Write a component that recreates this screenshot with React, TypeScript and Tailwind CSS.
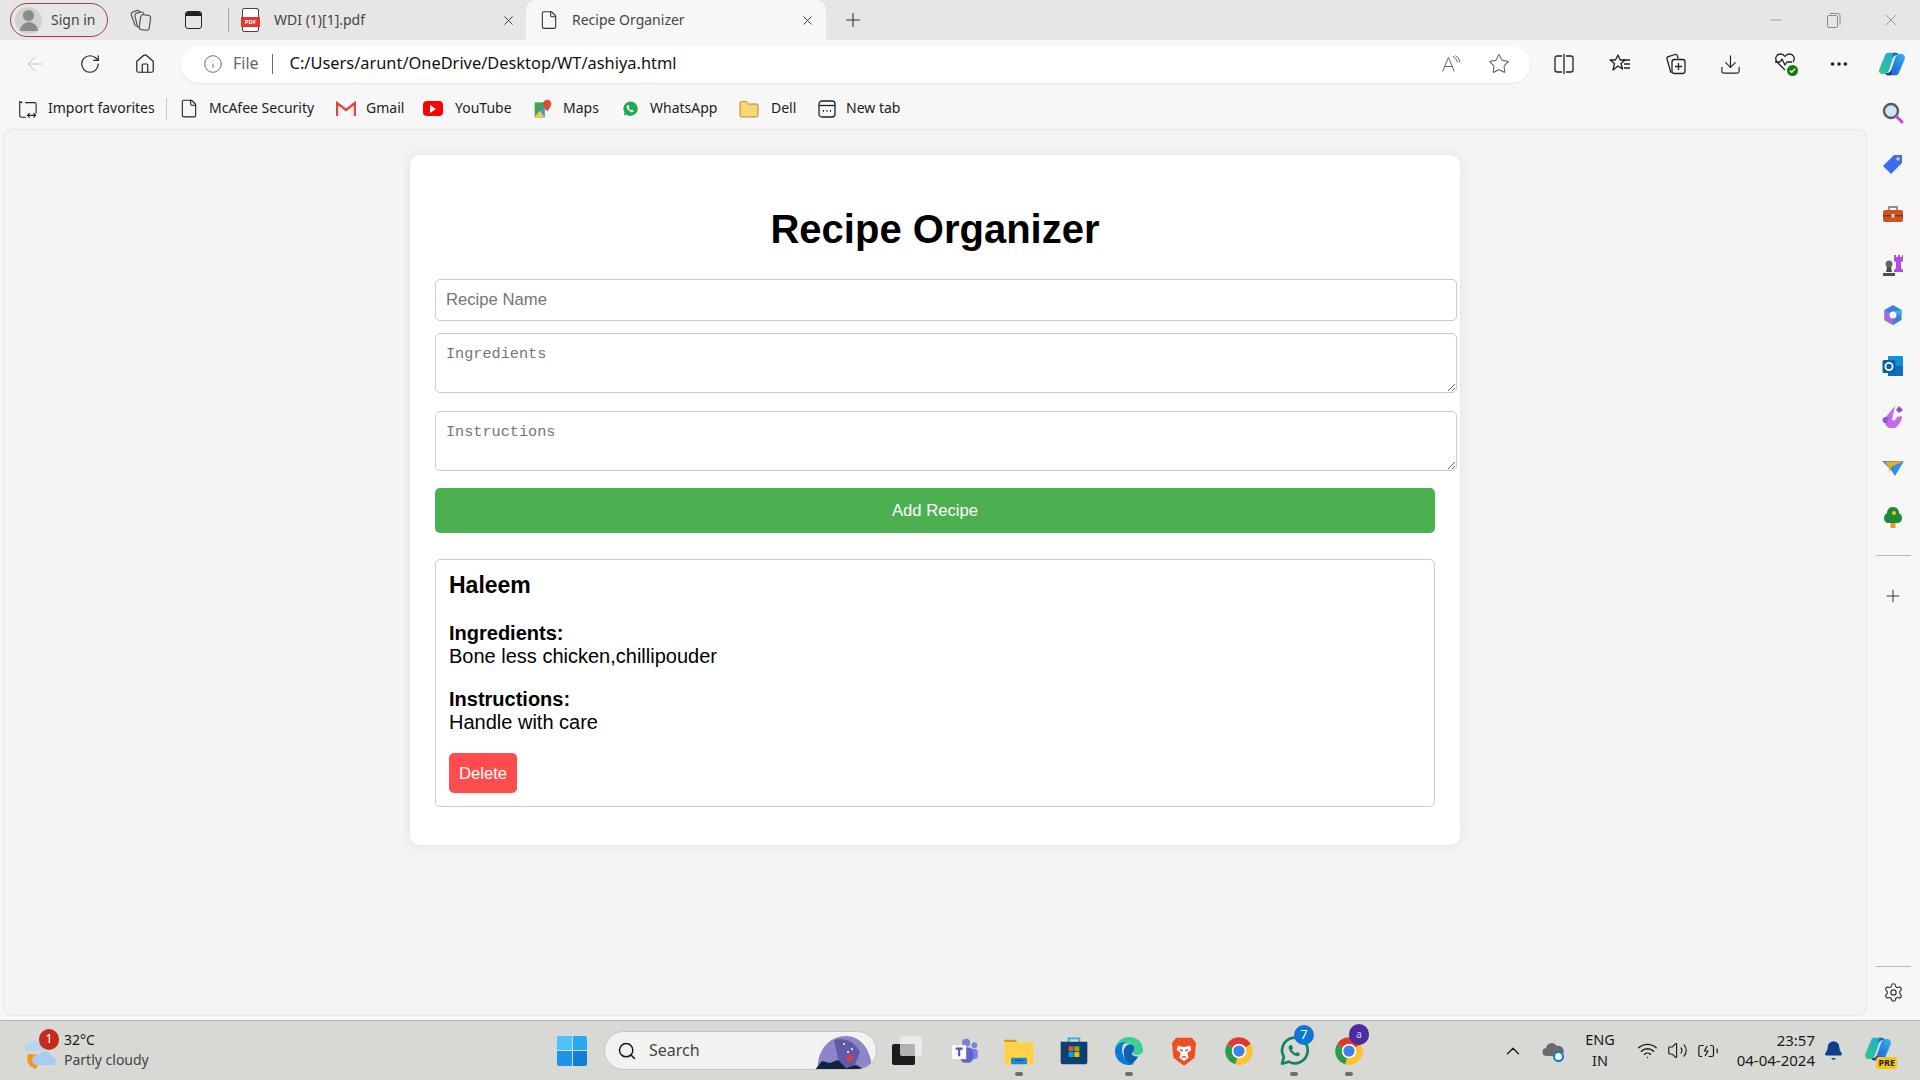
import type { ReactNode } from 'react';
import {
  ArrowLeft,
  BatteryCharging,
  Bell,
  ChevronUp,
  Download,
  Ellipsis,
  File,
  House,
  Info,
  Minus,
  Plus,
  RotateCw,
  Search,
  Settings,
  Star,
  Volume2,
  Wifi,
  X,
} from 'lucide-react';

function Svg({ children, size = 24, view = '0 0 24 24' }: { children: ReactNode; size?: number; view?: string }) {
  return (
    <svg width={size} height={size} viewBox={view} fill="none">
      {children}
    </svg>
  );
}

function CopilotIcon({ size = 30, id }: { size?: number; id: string }) {
  return (
    <Svg size={size}>
      <defs>
        <linearGradient id={`${id}a`} x1="0" y1="1" x2="1" y2="0">
          <stop offset="0" stopColor="#34c98a" />
          <stop offset="1" stopColor="#1aa6e0" />
        </linearGradient>
        <linearGradient id={`${id}b`} x1="0" y1="1" x2="1" y2="0">
          <stop offset="0" stopColor="#1b4fd0" />
          <stop offset="1" stopColor="#2fb4f0" />
        </linearGradient>
      </defs>
      <path d="M9 3h6c1 0 2 .6 2 1.500-3 0-4.200 2-5 5l-2 6c-.6 2.200-2 4.500-4 4.500H4.500C2.300 20 1 18 2 15.500L6 6c.7-2 1.500-3 3-3z" fill={`url(#${id}a)`} />
      <path d="M13 3h2c1 0 2 .6 2 1.500l-2.500.5L12 7z" fill="#1a6fb0" />
      <path d="M15 21H9c-1 0-2-.6-2-1.500 3 0 4.200-2 5-5l2-6c.6-2.200 2-4.500 4-4.500h1.500C21.700 4 23 6 22 8.500L18 18c-.7 2-1.500 3-3 3z" fill={`url(#${id}b)`} />
      <path d="M11 21H9c-1 0-2-.6-2-1.500l2.500-.5L12 17z" fill="#1434a8" />
    </Svg>
  );
}

function ChromeIcon() {
  return (
    <Svg size={30}>
      <path d="M12 12 2.470 6.500A11 11 0 0 1 21.530 6.500z" fill="#e3392c" />
      <path d="M12 12 21.530 6.500A11 11 0 0 1 9 22.600z" fill="#fbc32d" />
      <path d="M12 12 9 22.600A11 11 0 0 1 2.470 6.500z" fill="#2f9a4b" />
      <circle cx="12" cy="12" r="5.800" fill="#fff" />
      <circle cx="12" cy="12" r="4.500" fill="#3f7fe8" />
    </Svg>
  );
}

function WhatsAppGlyph({ size, ring, fill }: { size: number; ring: string; fill: string }) {
  return (
    <Svg size={size}>
      <path d="M3 21.500l1.400-5A9.600 9.600 0 1 1 8 20z" fill={fill} stroke={ring} strokeWidth="2" strokeLinejoin="round" />
      <path d="M9 7.500c-1 .6-1.400 2-.6 3.600 1 2 2.600 3.600 4.700 4.500 1.500.6 2.800.2 3.400-.9l-.3-1-2-1-1 1c-1.200-.5-2.200-1.500-2.800-2.800l1-1-1-2.300z" fill={ring} />
    </Svg>
  );
}

const sideIcons: ReactNode[] = [
  <Svg key="search">
    <circle cx="10" cy="10" r="7" fill="#cfe6f5" stroke="#5b5b5b" strokeWidth="2.400" />
    <path d="M15.500 15.500 21 21" stroke="#c545d6" strokeWidth="3" strokeLinecap="round" />
  </Svg>,
  <Svg key="tag">
    <path d="M13 3h8v8L10 22l-8-8z" fill="#3b6df0" />
    <circle cx="17" cy="7" r="1.800" fill="#f8c93b" />
  </Svg>,
  <Svg key="tools">
    <path d="M8 8V5h8v3" stroke="#8c8c8c" strokeWidth="1.800" />
    <rect x="2" y="8" width="20" height="12" rx="2" fill="#d2521f" />
    <rect x="2" y="13" width="20" height="1.500" fill="#8f3412" />
    <rect x="10.500" y="12" width="3" height="3.500" fill="#d8d8d8" />
  </Svg>,
  <Svg key="chess">
    <path d="M13 2h2v2h2V2h2v2h2V2h1v6l-2 1v6l2 2v2h-9v-2l2-2V9l-2-1z" fill="#b24de0" />
    <circle cx="8" cy="11" r="3.500" fill="#666" />
    <path d="M6 14h4l1 5H5zM2 20h12v3H2z" fill="#4d4d4d" />
  </Svg>,
  <Svg key="m365">
    <path d="M12 2l8.500 5v10L12 22l-8.500-5V7z" fill="#3f7ee0" />
    <path d="M3.500 7 12 12v10l-8.500-5z" fill="#a76bdc" />
    <path d="M20.500 7v6L12 8z" fill="#34b6d8" />
    <circle cx="12" cy="12" r="3.500" fill="#f6f6f6" />
  </Svg>,
  <Svg key="outlook">
    <rect x="7" y="2" width="15" height="20" rx="1" fill="#1492d8" />
    <path d="M7 12h15v10H7z" fill="#0f6cbd" />
    <rect x="1.500" y="6" width="13" height="13" rx="1.500" fill="#0a5fb0" />
    <circle cx="8" cy="12.500" r="3.600" stroke="#fff" strokeWidth="1.800" />
  </Svg>,
  <Svg key="designer">
    <path d="M14 2 4 14a7 7 0 0 0 14 6c2-2 3-5 3-8l-5 1c-1 3-3 4-5 3z" fill="#c66be8" />
    <circle cx="4.500" cy="16" r="3" fill="#8f5bd6" />
    <path d="M18 2l4 4-4 3-3-3z" fill="#8b4fe0" />
  </Svg>,
  <Svg key="send">
    <path d="M1 6h22L14 21l-4-6z" fill="#2f8fe8" />
    <path d="M4 7 23 6 10 12l-1 6-2-7z" fill="#f0a81e" />
  </Svg>,
  <Svg key="tree">
    <path d="M9.500 17h5v6h-5z" fill="#e89c16" />
    <path d="M12 2c4 0 6 3 6 6 2 1 3 3 3 5 0 3-2 5-5 5H8c-3 0-5-2-5-5 0-2 1-4 3-5 0-3 2-6 6-6z" fill="#1f8a3a" />
    <circle cx="13" cy="8" r="2" fill="#f6c21c" />
  </Svg>,
];

const taskbarIcons: { icon: ReactNode; width: string; dot?: boolean; badge?: ReactNode }[] = [
  {
    width: 'w-[60px]',
    icon: (
      <div className="relative h-[29px] w-[30px]">
        <div className="absolute bottom-0 left-0 h-[21px] w-[23px] rounded-[2px] bg-[#1c1c1c]" />
        <div className="absolute right-0 top-0 h-[20px] w-[22px] rounded-[2px] bg-[#f2f2f0] opacity-70" />
      </div>
    ),
  },
  {
    width: 'w-[55px]',
    icon: (
      <Svg size={28}>
        <circle cx="20" cy="7" r="2.500" fill="#7b83eb" />
        <rect x="16" y="10" width="7" height="9" rx="3" fill="#7b83eb" />
        <circle cx="13" cy="5" r="3.500" fill="#7a7fd8" />
        <rect x="8" y="9" width="11" height="13" rx="4" fill="#5f66c9" />
        <rect x="1" y="7" width="12" height="12" fill="#fafafa" />
        <path d="M4 10h6M7 10v6.500" stroke="#4b53bc" strokeWidth="1.800" />
      </Svg>
    ),
  },
  {
    width: 'w-[54px]',
    dot: true,
    icon: (
      <Svg size={32}>
        <path d="M1 3.500h8l2 2H1z" fill="#d79a17" />
        <path d="M1 5.500h22V22H1z" fill="#ffd24a" />
        <rect x="6" y="17" width="12" height="5" rx="1" fill="#1f87d8" />
        <rect x="9" y="18.500" width="6" height="1" fill="#0d5aa0" />
      </Svg>
    ),
  },
  {
    width: 'w-[55px]',
    icon: (
      <Svg size={32}>
        <path d="M8 5V2.500h8V5" stroke="#35a7d8" strokeWidth="1.400" />
        <path d="M2 5h20v15a2 2 0 0 1-2 2H4a2 2 0 0 1-2-2z" fill="#0f3f70" />
        <rect x="8" y="8.500" width="3.700" height="3.700" fill="#f25022" />
        <rect x="12.300" y="8.500" width="3.700" height="3.700" fill="#7fba00" />
        <rect x="8" y="12.800" width="3.700" height="3.700" fill="#00a4ef" />
        <rect x="12.300" y="12.800" width="3.700" height="3.700" fill="#ffb900" />
      </Svg>
    ),
  },
  {
    width: 'w-[55px]',
    dot: true,
    icon: (
      <Svg size={32}>
        <path d="M12 1.500c6 0 10.500 4 10.500 9.500 0 2.500-2 4-4.500 4-2 0-3.500-.8-3.500-2 1-.5 1.500-1.500 1.500-2.500C16 8 14 6.500 12 6.500 7 6.500 1.500 6 1.500 12 1.500 6 6 1.500 12 1.500z" fill="#3fcf8e" />
        <path d="M1.500 12C1.500 7 6 5 9.500 5 7 7 6.500 10 7 13c.7 4 4 8 9 8.500-1.200.7-2.700 1-4 1C6 22.500 1.500 18 1.500 12z" fill="#0c7ad6" />
        <path d="M8 12c.5-3 3-5 5-5 1.500 0 3 1.500 3 3 0 2-1 3-2 3.500 0 2 3 3 5 2.500-1 2-3.500 5-5 5.500C10 21 8 17 8 12z" fill="#0b5fb0" />
      </Svg>
    ),
  },
  {
    width: 'w-[55px]',
    icon: (
      <Svg size={32}>
        <path d="M6 2h12l3 4-1 11-8 6-8-6L3 6z" fill="#f04e23" />
        <path d="M7.500 8l4.500 1 4.500-1 1 3-3 2.500 1 3.500-3.500 2.500L8.500 17l1-3.500-3-2.500z" fill="#fff" />
        <path d="M9 11l2 .8M15 11l-2 .8M10.500 16.500h3" stroke="#f04e23" strokeWidth="1.200" />
      </Svg>
    ),
  },
  { width: 'w-[55px]', icon: <ChromeIcon /> },
  {
    width: 'w-[55px]',
    dot: true,
    icon: <WhatsAppGlyph size={32} ring="#12855f" fill="transparent" />,
    badge: (
      <div className="absolute left-[28px] top-[4px] flex h-[20px] w-[20px] items-center justify-center rounded-full bg-[#0a78d4] text-[13px] text-white">
        7
      </div>
    ),
  },
  {
    width: 'w-[55px]',
    dot: true,
    icon: <ChromeIcon />,
    badge: (
      <div className="absolute left-[28px] top-[3px] flex h-[21px] w-[20px] items-center justify-center rounded-full bg-[#4f2ba0] text-[10px] text-[#d9ccff]">
        a
      </div>
    ),
  },
];

const bookmarkText = 'mb-[2px] whitespace-nowrap text-[14px] text-[#1c1c1c]';

function Bookmark({ width, gap, icon, label }: { width: string; gap: string; icon: ReactNode; label: string }) {
  return (
    <div className={`flex shrink-0 items-center ${width} ${gap}`}>
      <div className="flex w-[20px] shrink-0 justify-center">{icon}</div>
      <span className={bookmarkText}>{label}</span>
    </div>
  );
}

function Recipe() {
  return (
    <div className="mt-[26px] box-border h-[248px] w-[1000px] rounded-[5px] border border-[#ccc] px-[13px] pt-[12px]">
      <h3 className="text-[23px] font-bold leading-[26px] text-black">Haleem</h3>
      <p className="mt-[24px] text-[20px] leading-[23px] text-black">
        <strong>Ingredients:</strong>
        <br />
        Bone less chicken,chillipouder
      </p>
      <p className="mt-[20px] text-[20px] leading-[23px] text-black">
        <strong>Instructions:</strong>
        <br />
        Handle with care
      </p>
      <button className="mt-[19px] h-[40px] w-[68px] rounded-[5px] bg-[#ff4d4d] text-[16.670px] text-white">Delete</button>
    </div>
  );
}

export default function App() {
  return (
    <div className="flex h-screen w-full flex-col overflow-hidden bg-[#f7f7f7] font-['Noto_Sans',sans-serif]">
      {/* tab strip */}
      <div className="flex h-[40px] shrink-0 items-center bg-[#e6e6e6] pl-[10px] text-[#333]">
        <div className="flex h-[34px] w-[98px] shrink-0 items-center rounded-full border-[1.500px] border-[#b3383c] pl-[4px]">
          <div className="flex h-[27px] w-[27px] shrink-0 flex-col items-center justify-center rounded-full bg-[#d0d0ce]">
            <div className="h-[11px] w-[11px] rounded-full bg-[#8a8a86]" />
            <div className="mt-[1px] h-[9px] w-[18px] rounded-t-full bg-[#8a8a86]" />
          </div>
          <span className="mb-[2px] ml-[9px] whitespace-nowrap text-[14px] text-[#444]">Sign in</span>
        </div>
        <div className="ml-[19px] flex w-[28px] shrink-0 justify-center">
          <svg width="22" height="22" viewBox="0 0 22 22" fill="#e6e6e6" stroke="#555" strokeWidth="1.200">
            <rect x="3" y="2" width="9" height="15" rx="2.500" transform="rotate(-20 7 10)" />
            <rect x="6" y="3.500" width="9" height="15" rx="2.500" transform="rotate(-14 10 11)" />
            <rect x="10" y="6" width="10" height="15" rx="2.500" transform="rotate(8 15 13)" />
          </svg>
        </div>
        <div className="ml-[24px] flex w-[28px] shrink-0 justify-center">
          <div className="h-[18px] w-[17px] overflow-hidden rounded-[3px] border-[1.500px] border-[#222]">
            <div className="h-[4px] bg-[#222]" />
          </div>
        </div>
        <div className="ml-[21px] h-[24px] w-px shrink-0 bg-[#a9a9a9]" />
        <div className="ml-[12px] flex w-[19px] shrink-0 flex-col items-center">
          <div className="relative h-[24px] w-[17px] rounded-[2px] border border-[#444] bg-white">
            <div className="absolute bottom-[4px] left-[-2px] w-[19px] bg-[#e5352c] text-center text-[6px] font-bold leading-[10px] text-white">PDF</div>
          </div>
        </div>
        <span className="mb-[2px] ml-[14px] w-[227px] shrink-0 whitespace-nowrap text-[14px] text-[#444]">WDI (1)[1].pdf</span>
        <X size={15} strokeWidth={1.500} className="shrink-0 text-[#333]" />
        <div className="ml-[10px] flex h-[40px] w-[300px] shrink-0 items-center rounded-t-[10px] bg-[#f7f7f7] pl-[13px]">
          <File size={20} strokeWidth={1.300} className="shrink-0 text-[#333]" />
          <span className="mb-[2px] ml-[13px] w-[228px] shrink-0 whitespace-nowrap text-[14px] text-[#444]">Recipe Organizer</span>
          <X size={15} strokeWidth={1.500} className="shrink-0 text-[#333]" />
        </div>
        <Plus size={22} strokeWidth={1.200} className="ml-[16px] shrink-0 text-[#333]" />
        <div className="ml-auto flex items-center pr-[19px] text-[#8a8a8a]">
          <Minus size={18} strokeWidth={1} />
          <div className="ml-[41px] h-[18px] w-[16px]">
            <svg width="16" height="18" viewBox="0 0 16 18" fill="none" stroke="#8a8a8a" strokeWidth="1">
              <rect x="1.500" y="4.500" width="10" height="12" rx="1.500" />
              <path d="M4 2.500h8a2 2 0 0 1 2 2v9" />
            </svg>
          </div>
          <X size={20} strokeWidth={1} className="ml-[39px]" />
        </div>
      </div>

      {/* address bar */}
      <div className="flex h-[47px] shrink-0 items-center pl-[23px] pt-[1px]">
        <ArrowLeft size={24} strokeWidth={1} className="shrink-0 text-[#c4c4c4]" />
        <RotateCw size={22} strokeWidth={1.300} className="ml-[32px] shrink-0 text-[#222]" />
        <House size={22} strokeWidth={1.300} className="ml-[33px] shrink-0 text-[#222]" />
        <div className="ml-[25px] flex h-[37px] w-[1349px] shrink-0 items-center rounded-full bg-white pl-[22px] shadow-[0_1px_2px_rgba(0,0,0,0.08)]">
          <Info size={20} strokeWidth={1.100} className="shrink-0 text-[#666]" />
          <span className="ml-[10px] mb-[2px] text-[16px] text-[#666]">File</span>
          <div className="ml-[13px] h-[20px] w-px bg-[#666]" />
          <span className="ml-[17px] mb-[1px] whitespace-nowrap text-[16.400px] text-[#111]">C:/Users/arunt/OneDrive/Desktop/WT/ashiya.html</span>
          <div className="ml-auto flex items-center pr-[20px]">
            <svg width="20" height="20" viewBox="0 0 24 22" fill="none" stroke="#666" strokeWidth="1.200">
              <path d="M2 20 9 3l7 17M4.500 14h9" />
              <path d="M14 2c3 1 5 3.500 5.500 7M17 1c3 1 5 4 5.500 8" />
            </svg>
            <Star size={22} strokeWidth={1.100} className="ml-[27px] text-[#555]" />
          </div>
        </div>
        <div className="ml-[23px] flex w-[22px] shrink-0 justify-center">
          <svg width="22" height="22" viewBox="0 0 22 22" fill="none" stroke="#222" strokeWidth="1.300">
            <path d="M9 3H4a2 2 0 0 0-2 2v12a2 2 0 0 0 2 2h5M13 3h5a2 2 0 0 1 2 2v12a2 2 0 0 1-2 2h-5M11 1v20" />
          </svg>
        </div>
        <div className="ml-[34px] shrink-0">
          <svg width="22" height="22" viewBox="0 0 22 22" fill="none" stroke="#222" strokeWidth="1.300" strokeLinejoin="round">
            <path d="M9 2l2.200 5H16l-4 3.500 1.500 5.500L9 13l-5 4 1.500-6.500L1 7h5.500z" />
            <path d="M14 7h7M15 11h6M15 15h6" />
          </svg>
        </div>
        <div className="ml-[33px] shrink-0">
          <svg width="23" height="24" viewBox="0 0 23 24" fill="none" stroke="#222" strokeWidth="1.300">
            <path d="M7 21 3 7a2 2 0 0 1 1.500-2.500L11 2.500a2 2 0 0 1 2.500 1.500l.5 2.500" />
            <rect x="8" y="7.500" width="13" height="14" rx="2.500" fill="#f7f7f7" />
            <path d="M14.500 11v7M11 14.500h7" />
          </svg>
        </div>
        <Download size={23} strokeWidth={1.200} className="ml-[32px] shrink-0 text-[#222]" />
        <div className="relative ml-[32px] h-[24px] w-[22px] shrink-0">
          <svg width="22" height="22" viewBox="0 0 22 22" fill="none" stroke="#222" strokeWidth="1.300" strokeLinejoin="round">
            <path d="M11 18 3 10C0 6 3 2 6.500 2c2 0 3.500 1 4.500 2.500C12 3 13.500 2 15.500 2 19 2 22 6 19 10" />
            <path d="M1 10h5l2-3 3 6 2-3h5" />
          </svg>
          <div className="absolute bottom-0 right-[-2px] flex h-[11px] w-[11px] items-center justify-center rounded-full bg-[#107c10]">
            <svg width="7" height="7" viewBox="0 0 8 8" fill="none" stroke="#fff" strokeWidth="1.500">
              <path d="M1 4l2 2 4-4" />
            </svg>
          </div>
        </div>
        <Ellipsis size={22} strokeWidth={2} className="ml-[32px] shrink-0 text-[#222]" />
        <div className="ml-[27px] shrink-0">
          <CopilotIcon size={30} id="cpTop" />
        </div>
      </div>

      <div className="flex min-h-0 flex-1">
        <div className="flex min-w-0 flex-1 flex-col">
          {/* favorites bar */}
          <div className="flex h-[43px] shrink-0 items-center pl-[17px]">
            <Bookmark
              width="w-[149px]"
              gap="gap-[11px]"
              label="Import favorites"
              icon={
                <svg width="22" height="22" viewBox="0 0 22 22" fill="none" stroke="#222" strokeWidth="1.200">
                  <path d="M9 4h10a2 2 0 0 1 2 2v10M10 20H5a2 2 0 0 1-2-2V3l3 1" />
                  <path d="M12 18h8M14 15.500 11.500 18l2.500 2.500M18 15.500l2.500 2.500-2.500 2.500" />
                </svg>
              }
            />
            <div className="mr-[12px] h-[22px] w-px shrink-0 bg-[#c9c9c9]" />
            <Bookmark width="w-[157px]" gap="gap-[10px]" label="McAfee Security" icon={<File size={21} strokeWidth={1.300} className="text-[#222]" />} />
            <Bookmark
              width="w-[87px]"
              gap="gap-[10px]"
              label="Gmail"
              icon={
                <svg width="20" height="16" viewBox="0 0 20 16" fill="none">
                  <path d="M1 15V2l9 7 9-7v13" stroke="#d64a3b" strokeWidth="2.400" />
                  <path d="M4 6v9M16 6v9" stroke="#e8e8e8" strokeWidth="2.400" />
                </svg>
              }
            />
            <Bookmark
              width="w-[110px]"
              gap="gap-[12px]"
              label="YouTube"
              icon={
                <div className="flex h-[15px] w-[20px] items-center justify-center rounded-[4px] bg-[#f00]">
                  <div className="h-0 w-0 border-y-[4px] border-l-[6px] border-y-transparent border-l-white" />
                </div>
              }
            />
            <Bookmark
              width="w-[87px]"
              gap="gap-[10px]"
              label="Maps"
              icon={
                <Svg size={20}>
                  <path d="M2 4h12v18H2z" fill="#3fa758" />
                  <path d="M2 22 14 8v14z" fill="#4b8df0" />
                  <path d="M2 22l6-8 6 8z" fill="#f8cd3a" />
                  <path d="M17 1a5 5 0 0 1 5 5c0 3-5 9-5 9s-5-6-5-9a5 5 0 0 1 5-5z" fill="#de4b3a" />
                </Svg>
              }
            />
            <Bookmark width="w-[119px]" gap="gap-[10px]" label="WhatsApp" icon={<WhatsAppGlyph size={20} ring="#fff" fill="#1faa53" />} />
            <Bookmark
              width="w-[78px]"
              gap="gap-[12px]"
              label="Dell"
              icon={
                <svg width="20" height="18" viewBox="0 0 20 18" fill="none">
                  <path d="M1 3a1.500 1.500 0 0 1 1.500-1.500h5l2 2.500h8A1.500 1.500 0 0 1 19 5.500v10a1.500 1.500 0 0 1-1.500 1.500h-15A1.500 1.500 0 0 1 1 15.500z" fill="#f7d774" stroke="#b08c30" />
                </svg>
              }
            />
            <Bookmark
              width="w-[90px]"
              gap="gap-[9px]"
              label="New tab"
              icon={
                <svg width="18" height="20" viewBox="0 0 18 20" fill="none" stroke="#222" strokeWidth="1.300">
                  <rect x="1" y="2" width="16" height="16" rx="3" />
                  <path d="M1 6.500h16" />
                  <path d="M5 12h1M8.500 12h1M12 12h1" strokeWidth="1.800" />
                </svg>
              }
            />
          </div>

          {/* page viewport */}
          <div className="mb-[5px] ml-[4px] min-h-0 flex-1 rounded-[8px] bg-[#f4f4f4] pt-[25px] shadow-[0_0_2px_rgba(0,0,0,0.2)] font-['Liberation_Sans',sans-serif]">
            <div className="mx-auto box-border h-[690px] w-[1050px] rounded-[10px] bg-white p-[25px] shadow-[0_0_12px_rgba(0,0,0,0.08)]">
              <h1 className="mb-[27px] mt-[26px] text-center text-[40px] font-bold leading-[46px] text-black">Recipe Organizer</h1>
              <input
                placeholder="Recipe Name"
                className="box-border block h-[42px] w-[1022px] rounded-[5px] border border-[#ccc] px-[10px] text-[16.670px] outline-none placeholder:text-[#757575]"
              />
              <textarea
                placeholder="Ingredients"
                className="mt-[12px] box-border block h-[60px] w-[1022px] rounded-[5px] border border-[#ccc] px-[10px] pb-[7px] pt-[11px] font-['Liberation_Mono',monospace] text-[15.200px] leading-[19px] outline-none placeholder:text-[#757575]"
              />
              <textarea
                placeholder="Instructions"
                className="mt-[18px] box-border block h-[60px] w-[1022px] rounded-[5px] border border-[#ccc] px-[10px] pb-[7px] pt-[11px] font-['Liberation_Mono',monospace] text-[15.200px] leading-[19px] outline-none placeholder:text-[#757575]"
              />
              <button className="mt-[17px] h-[45px] w-[1000px] rounded-[5px] bg-[#4caf50] text-[16.670px] text-white">Add Recipe</button>
              <Recipe />
            </div>
          </div>
        </div>

        {/* edge sidebar */}
        <div className="flex w-[54px] shrink-0 flex-col items-center pb-[5px] pt-[14px]">
          <div className="flex flex-col items-center gap-[26.500px]">{sideIcons}</div>
          <div className="mt-[26px] h-px w-[35px] bg-[#b9b9b9]" />
          <Plus size={20} strokeWidth={1.200} className="mt-[30px] text-[#333]" />
          <div className="mt-auto h-px w-[35px] bg-[#b9b9b9]" />
          <Settings size={21} strokeWidth={1.300} className="mb-[12px] mt-[15px] text-[#333]" />
        </div>
      </div>

      {/* taskbar */}
      <div className="flex h-[60px] shrink-0 items-center border-t border-[#b8b9b5] bg-[#d8d9d5] pl-[24px] text-[#1a1a1a]">
        <div className="relative h-[42px] w-[34px] shrink-0">
          <svg className="absolute bottom-0 left-0" width="34" height="40" viewBox="0 0 34 40" fill="none">
            <path d="M4 22a11 11 0 0 0 8 15l6-14z" fill="#f29a1f" />
            <path d="M12 33a5 5 0 0 1 3-10 7 7 0 0 1 13 2 4 4 0 0 1 0 8z" fill="#a9cdf0" />
            <path d="M2 19a4 4 0 0 1 3-7 6 6 0 0 1 11 1 3 3 0 0 1 0 6z" fill="#b6d4ef" />
          </svg>
          <div className="absolute left-[15px] top-[-1px] flex h-[21px] w-[20px] items-center justify-center rounded-full bg-[#c42b1c] text-[13px] text-white">1</div>
        </div>
        <div className="mb-[2px] ml-[6px] w-[112px] shrink-0 text-[14px] leading-[20px]">
          <div>32°C</div>
          <div className="text-[#444]">Partly cloudy</div>
        </div>
        <div className="ml-[381px] grid h-[30px] w-[30px] shrink-0 grid-cols-2 gap-[1px]">
          <div className="rounded-tl-[2px] bg-[#4fc3f7]" />
          <div className="rounded-tr-[2px] bg-[#29a8ec]" />
          <div className="rounded-bl-[2px] bg-[#1b95e8]" />
          <div className="rounded-br-[2px] bg-[#0f7fd8]" />
        </div>
        <div className="relative ml-[17px] flex h-[39px] w-[273px] shrink-0 items-center overflow-hidden rounded-full border border-[#c6c6c4] bg-[#f2f2f0] pl-[12px]">
          <Search size={20} strokeWidth={1.800} className="text-[#1a1a1a]" />
          <span className="mb-[2px] ml-[12px] text-[16px] text-[#444]">Search</span>
          <svg className="absolute right-0 top-0" width="64" height="39" viewBox="0 0 64 39" fill="none">
            <path d="M6 39C4 18 18 4 34 4s26 16 26 35z" fill="#8a86c8" />
            <path d="M22 8c8-3 20 0 26 12l-6 15H28z" fill="#5f5aa6" />
            <circle cx="38" cy="26" r="4" fill="#b8475e" />
            <path d="M2 39l8-10 8 2 8-3 8 8 10-3 12 6z" fill="#12223f" />
            <circle cx="32" cy="12" r="1" fill="#fff" />
            <circle cx="40" cy="17" r="1" fill="#fff" />
            <circle cx="36" cy="20" r="1" fill="#fff" />
          </svg>
        </div>
        <div className="flex shrink-0 items-center">
          {taskbarIcons.map((item, i) => (
            <div key={i} className={`relative flex h-[59px] shrink-0 items-center justify-center ${item.width}`}>
              {item.icon}
              {item.badge}
              {item.dot && <div className="absolute bottom-[4px] h-[4px] w-[8px] rounded-full bg-[#6e6e6e]" />}
            </div>
          ))}
        </div>
        <ChevronUp size={22} strokeWidth={1.500} className="ml-[126px] shrink-0" />
        <div className="relative ml-[18px] h-[22px] w-[22px] shrink-0">
          <svg width="22" height="18" viewBox="0 0 22 18" fill="#6b6b6b">
            <path d="M5 16a4 4 0 0 1-1-8 6 6 0 0 1 11-2 5 5 0 0 1 3 10z" />
          </svg>
          <div className="absolute bottom-0 right-0 h-[11px] w-[11px] rounded-full border-2 border-[#0f78d4] bg-white" />
        </div>
        <div className="mb-[2px] ml-[17px] w-[38px] shrink-0 text-center text-[14.500px] leading-[21px]">
          <div>ENG</div>
          <div>IN</div>
        </div>
        <Wifi size={21} strokeWidth={1.600} className="ml-[18px] shrink-0" />
        <Volume2 size={21} strokeWidth={1.300} className="ml-[9px] shrink-0" />
        <BatteryCharging size={22} strokeWidth={1.300} className="ml-[9px] shrink-0" />
        <div className="mb-[2px] ml-[8px] w-[88px] shrink-0 text-right text-[15px] leading-[20px]">
          <div>23:57</div>
          <div>04-04-2024</div>
        </div>
        <Bell size={21} fill="#0b3f8a" strokeWidth={1.200} className="ml-[8px] shrink-0 text-[#0b3f8a]" />
        <div className="relative ml-[19px] h-[34px] w-[32px] shrink-0">
          <CopilotIcon size={30} id="cpTask" />
          <div className="absolute bottom-[-1px] right-[-2px] rounded-[3px] bg-[#f5c518] px-[2px] text-[9px] font-bold leading-[12px] text-[#222]">PRE</div>
        </div>
      </div>
    </div>
  );
}
